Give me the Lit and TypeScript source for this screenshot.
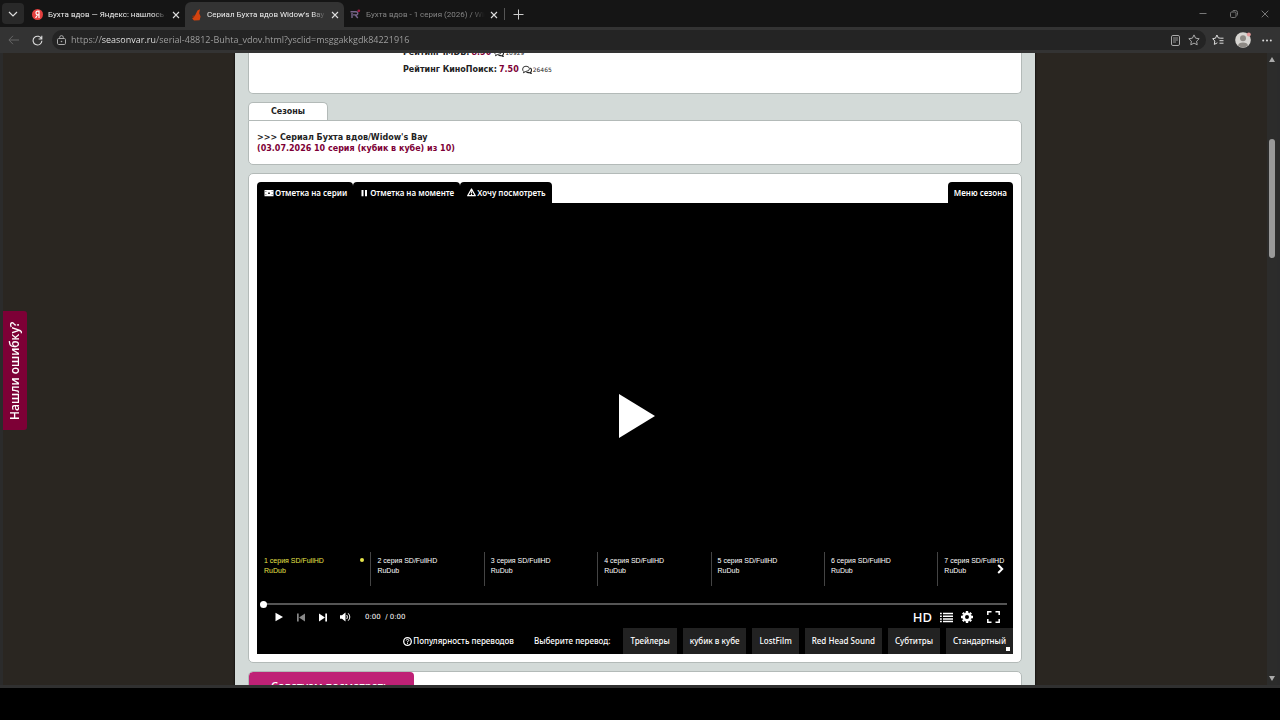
import { LitElement, html, css, svg } from "lit";
import { customElement, state } from "lit/decorators.js";
import { classMap } from "lit/directives/class-map.js";

const icon = (name: string, w: number, h: number, box: string, body: unknown) =>
  html`<svg class="icon ${name}" width=${w} height=${h} viewBox=${box} aria-hidden="true">${body}</svg>`;

const close = () =>
  icon("close", 8, 8, "0 0 8 8", svg`<path d="M1 1 7 7M7 1 1 7" fill="none" stroke="currentColor" stroke-width="1.1"/>`);

@customElement("browser-tabs")
export class BrowserTabs extends LitElement {
  static styles = css`
    :host {
      display: flex;
      align-items: flex-end;
      height: 27px;
      background: #151515;
      color: #eee;
      font: 8px/12px Roboto, "Noto Sans", sans-serif;
    }
    button {
      border: 0;
      padding: 0;
      background: none;
      color: inherit;
      display: grid;
      place-items: center;
    }
    .list {
      width: 22px;
      height: 21px;
      margin: 0 2px 3px;
      border-radius: 4px;
      background: #292929;
    }
    .tab {
      display: flex;
      align-items: center;
      box-sizing: border-box;
      flex: 0 1 159px;
      min-width: 0;
      height: 25px;
      padding: 0 5px 0 6px;
      gap: 5px;
      border-radius: 6px 6px 0 0;
    }
    .tab.active {
      background: #333;
    }
    .tab.idle {
      color: #858585;
    }
    .tab .title {
      flex: 1;
      min-width: 0;
      overflow: hidden;
      white-space: nowrap;
      mask-image: linear-gradient(to right, #000 calc(100% - 14px), transparent);
    }
    .tab .icon.close {
      color: #ddd;
    }
    .icon {
      flex: none;
    }
    .divider {
      width: 1px;
      height: 12px;
      margin: 0 0 7px 1px;
      background: #555;
    }
    .add {
      width: 12px;
      height: 25px;
      margin-left: 7px;
    }
    .window {
      display: flex;
      margin-left: auto;
      color: #777;
    }
    .window button {
      width: 31px;
      height: 27px;
    }
  `;

  render() {
    return html`
      <button class="list" aria-label="Вкладки">
        ${icon("", 10, 6, "0 0 10 6", svg`<path d="M1 1 5 5 9 1" fill="none" stroke="#ddd" stroke-width="1.2"/>`)}
      </button>
      <div class="tab">
        ${icon("", 11, 11, "0 0 11 11", svg`<circle cx="5.5" cy="5.5" r="5.5" fill="#e5403f"/><path d="M7 9V2.2H5.7C3.4 2.2 3.4 5.8 5.7 5.8H7M5.5 5.8 3.6 9" fill="none" stroke="#fff" stroke-width="1.2"/>`)}
        <span class="title">Бухта вдов — Яндекс: нашлось 49 тыс.</span>
        <button aria-label="Закрыть">${close()}</button>
      </div>
      <div class="tab active">
        ${icon("", 11, 12, "0 0 11 12", svg`<path d="M6.5 1.5 9 0.3 8.2 4.3 9.6 7.5 8.6 11.2 3 11.6 1.2 9.6 4 6.5Z" fill="#d4430f"/><path d="M1 7 4 6 2.4 9Z" fill="#8b2b0c"/>`)}
        <span class="title">Сериал Бухта вдов Widow's Bay смотреть</span>
        <button aria-label="Закрыть">${close()}</button>
      </div>
      <div class="tab idle">
        ${icon("", 11, 11, "0 0 11 11", svg`<path d="M.5 2.7H6Q7.8 2.7 7.8 4.3T6 5.9H3M2 4V9M5.3 6 7.8 9" fill="none" stroke="#77658a" stroke-width="1.4"/><circle cx="8.8" cy="1.8" r="1.4" fill="#a01c45"/>`)}
        <span class="title">Бухта вдов - 1 серия (2026) / Widow's Bay</span>
        <button aria-label="Закрыть">${close()}</button>
      </div>
      <span class="divider"></span>
      <button class="add" aria-label="Новая вкладка">
        ${icon("", 11, 11, "0 0 11 11", svg`<path d="M5.5 .5V10.5M.5 5.5H10.5" fill="none" stroke="#ccc"/>`)}
      </button>
      <div class="window">
        <button aria-label="Свернуть">${icon("", 8, 8, "0 0 8 8", svg`<path d="M.5 3.5H7.5" stroke="currentColor"/>`)}</button>
        <button aria-label="Развернуть">
          ${icon("", 8, 8, "0 0 8 8", svg`<rect x=".5" y="2" width="5.5" height="5.5" rx="1.2" fill="none" stroke="currentColor"/><path d="M2.3 1.5Q2.6.5 4 .5H5.5Q7.5.5 7.5 2.5V4.5Q7.5 5.5 6.7 5.7" fill="none" stroke="currentColor"/>`)}
        </button>
        <button aria-label="Закрыть окно">${icon("", 8, 8, "0 0 8 8", svg`<path d="M.7 .7 7.3 7.3M7.3 .7 .7 7.3" stroke="currentColor"/>`)}</button>
      </div>
    `;
  }
}

@customElement("browser-toolbar")
export class BrowserToolbar extends LitElement {
  static styles = css`
    :host {
      display: flex;
      align-items: center;
      gap: 11px;
      height: 26px;
      padding: 0 8px;
      background: #333;
      color: #aaa;
    }
    button {
      flex: none;
      border: 0;
      padding: 0;
      background: none;
      color: inherit;
      display: grid;
      place-items: center;
    }
    .nav {
      display: flex;
      gap: 13px;
    }
    .back {
      color: #666;
    }
    .reload {
      color: #ddd;
    }
    .address {
      display: flex;
      align-items: center;
      gap: 5px;
      flex: 1;
      height: 20px;
      margin: 0 -5px 0 -2px;
      padding: 0 6px 0 5px;
      border-radius: 10px;
      background: #242424;
    }
    .address input {
      flex: 1;
      min-width: 0;
      height: 20px;
      border: 0;
      padding: 0;
      outline: 0;
      color: #a4a4a4;
      font: 9px/20px "Open Sans", "Noto Sans", sans-serif;
      background: linear-gradient(to right, #a4a4a4 30px, #f0f0f0 30px, #f0f0f0 84px, #a4a4a4 84px);
      background-clip: text;
      -webkit-text-fill-color: transparent;
    }
    .address .star {
      margin-left: 3px;
    }
    .right {
      color: #ddd;
    }
  `;

  render() {
    const star = "M6 .9 7.6 4.2 11.2 4.7 8.6 7.2 9.2 10.8 6 9.1 2.8 10.8 3.4 7.2 .8 4.7 4.4 4.2Z";
    return html`
      <div class="nav">
        <button class="back" aria-label="Назад">
          ${icon("", 11, 10, "0 0 11 10", svg`<path d="M5 .8 .9 5 5 9.2M1 5H11" fill="none" stroke="currentColor"/>`)}
        </button>
        <button class="reload" aria-label="Обновить">
          ${icon("", 11, 11, "0 0 11 11", svg`<path d="M9.6 4A4.4 4.4 0 1 0 9.9 5.8M9.8 .8V4H6.6" fill="none" stroke="currentColor" stroke-width="1.1"/>`)}
        </button>
      </div>
      <div class="address">
        ${icon("", 9, 10, "0 0 9 10", svg`<rect x=".5" y="3.5" width="8" height="6" rx="1.2" fill="none" stroke="currentColor"/><path d="M2.7 3.5V2.4A1.8 1.8 0 0 1 6.3 2.4V3.5" fill="none" stroke="currentColor"/><circle cx="4.5" cy="6.5" r=".8" fill="currentColor"/>`)}
        <input
          type="text"
          aria-label="Адрес"
          value="https://seasonvar.ru/serial-48812-Buhta_vdov.html?ysclid=msggakkgdk84221916"
        />
        <button aria-label="Режим чтения">
          ${icon("", 9, 11, "0 0 9 11", svg`<rect x=".5" y=".5" width="8" height="10" rx="1.4" fill="none" stroke="currentColor"/><path d="M2 3H7M2 5H7M2 7H5" stroke="currentColor" stroke-width=".8"/>`)}
        </button>
        <button class="star" aria-label="В избранное">
          ${icon("", 12, 12, "0 0 12 12", svg`<path d=${star} fill="none" stroke="currentColor"/>`)}
        </button>
      </div>
      <button class="right" aria-label="Избранное">
        ${icon("", 12, 12, "0 0 12 12", svg`<path d="M8.2 4.1 6.4 4 4.9 1 3.5 4.2 .7 4.7 2.8 7 2.3 10.4 5.4 8.8M8.2 4.2H11.5M7.5 6.7H11.5M7.5 9.2H11.5" fill="none" stroke="currentColor"/>`)}
      </button>
      <button aria-label="Профиль">
        ${icon("", 16, 16, "0 0 16 16", svg`<circle cx="8" cy="8" r="7.8" fill="#d8d6d2"/><circle cx="8" cy="6.3" r="3" fill="#8d8984"/><path d="M3 13.5Q3.5 10.5 8 10.5T13 13.5Q8 17.5 3 13.5" fill="#8d8984"/><circle cx="13.8" cy="2.4" r="2" fill="#e39a9a"/>`)}
      </button>
      <button class="right" aria-label="Меню">
        ${icon("", 10, 3, "0 0 10 3", svg`<g fill="currentColor"><circle cx="1.2" cy="1.5" r="1"/><circle cx="5" cy="1.5" r="1"/><circle cx="8.8" cy="1.5" r="1"/></g>`)}
      </button>
    `;
  }
}

@customElement("season-player")
export class SeasonPlayer extends LitElement {
  @state() private current = 0;

  private episodes = [1, 2, 3, 4, 5, 6, 7];
  private translations = ["Трейлеры", "кубик в кубе", "LostFilm", "Red Head Sound", "Субтитры", "Стандартный"];

  static styles = css`
    :host {
      display: block;
      color: #fff;
      font: 500 8px/12px "Noto Sans", sans-serif;
    }
    button {
      border: 0;
      padding: 0;
      margin: 0;
      background: none;
      color: inherit;
      font: inherit;
      display: flex;
      align-items: center;
      justify-content: center;
      white-space: nowrap;
    }
    .marks {
      display: flex;
      font-weight: 600;
    }
    .marks button {
      height: 21px;
      padding: 0 6px 0 7px;
      gap: 1px;
      border-radius: 4px 4px 0 0;
      background: #000;
    }
    .marks .season {
      margin-left: auto;
      padding: 0 6px;
    }
    .screen {
      position: relative;
      display: grid;
      aspect-ratio: 16 / 9;
      background: #000;
    }
    .start,
    .panel {
      grid-area: 1 / 1;
      min-width: 0;
    }
    .start {
      place-self: center;
      padding-left: 4px;
    }
    .panel {
      align-self: end;
      padding-bottom: 2px;
    }
    .playlist {
      position: relative;
    }
    .episodes {
      display: flex;
      overflow: hidden;
    }
    .episode {
      box-sizing: border-box;
      flex: 0 0 15%;
      height: 34px;
      align-items: flex-start;
      justify-content: space-between;
      padding: 4px 6px;
      border-left: 1px solid #444;
      font: 7px/10px "Liberation Sans", Arial, sans-serif;
      text-align: left;
    }
    .episode:first-child {
      border-color: transparent;
    }
    .episode.active {
      color: #e6e44a;
    }
    .episode.active::after {
      content: "";
      width: 4px;
      height: 4px;
      margin-top: 2px;
      border-radius: 50%;
      background: #e6e44a;
    }
    .next-page {
      position: absolute;
      right: 9px;
      top: 12px;
    }
    .seek {
      display: block;
      width: calc(100% - 9px);
      height: 8px;
      margin: 14px 6px 0 3px;
      appearance: none;
      background: linear-gradient(#555, #555) center / 100% 2px no-repeat;
    }
    .seek::-webkit-slider-thumb {
      appearance: none;
      width: 7px;
      height: 7px;
      border-radius: 50%;
      background: #fff;
    }
    .controls {
      display: flex;
      align-items: center;
      height: 18px;
      padding: 0 13px 0 16px;
    }
    .controls .group {
      display: flex;
      align-items: center;
      gap: 10px;
    }
    .controls .group button {
      width: 12px;
      height: 18px;
    }
    .controls .dim {
      color: #888;
    }
    .time {
      margin-left: 14px;
      font: 7px/18px "DejaVu Sans", Verdana, sans-serif;
    }
    .tools {
      display: flex;
      align-items: center;
      gap: 8px;
      margin-left: auto;
    }
    .hd {
      font-size: 13px;
      line-height: 18px;
    }
    .full {
      margin-left: 6px;
    }
    .voices {
      position: relative;
      display: flex;
      flex-wrap: wrap;
      justify-content: flex-end;
      gap: 6px;
      background: #000;
    }
    .voices button {
      height: 26px;
    }
    .voices .voice {
      padding: 0 7px;
      background: #222;
    }
    .voices .rating {
      gap: 1px;
      margin-right: 14px;
    }
    .voices .label {
      margin-right: 7px;
      line-height: 26px;
    }
    .corner {
      position: absolute;
      right: 3px;
      bottom: 3px;
      width: 4px;
      height: 4px;
      background: #fff;
    }
  `;

  render() {
    return html`
      <div class="marks">
        <button>
          ${icon("", 10, 8, "0 0 10 8", svg`<path fill="currentColor" fill-rule="evenodd" d="M.5 1H9.5V7.3H.5ZM1.5 2.2V3H2.3V2.2ZM1.5 5.2V6H2.3V5.2ZM7.7 2.2V3H8.5V2.2ZM7.7 5.2V6H8.5V5.2ZM4.2 3.4V4.9H5.8V3.4Z"/>`)}
          Отметка на серии
        </button>
        <button>
          ${icon("", 9, 8, "0 0 9 8", svg`<path fill="currentColor" d="M1.5 1H3.5V7.3H1.5ZM5 1H7V7.3H5Z"/>`)}
          Отметка на моменте
        </button>
        <button>
          ${icon("", 9, 9, "0 0 9 9", svg`<path d="M4.5 1 8.3 7.7H.7Z" fill="none" stroke="currentColor" stroke-width="1.3" stroke-linejoin="round"/><path d="M4.5 3.2V5.4M4.5 6V6.9" stroke="currentColor" stroke-width="1.1"/>`)}
          Хочу посмотреть
        </button>
        <button class="season">Меню сезона</button>
      </div>
      <div class="screen">
        <button class="start" aria-label="Смотреть">
          ${icon("", 36, 44, "0 0 36 44", svg`<path d="M0 0 36 22 0 44Z" fill="#fff"/>`)}
        </button>
        <div class="panel">
          <div class="playlist">
            <div class="episodes">
              ${this.episodes.map(
                (n, i) => html`<button
                  class=${classMap({ episode: true, active: i === this.current })}
                  @click=${() => (this.current = i)}
                >
                  <span>${n} серия SD/FullHD<br />RuDub</span>
                </button>`
              )}
            </div>
            <button class="next-page" aria-label="Дальше">
              ${icon("", 7, 10, "0 0 7 10", svg`<path d="M1.2 1 5.2 5 1.2 9" fill="none" stroke="#fff" stroke-width="2"/>`)}
            </button>
          </div>
          <input class="seek" type="range" min="0" max="100" value="0" aria-label="Позиция" />
          <div class="controls">
            <div class="group">
              <button aria-label="Играть">${icon("", 8, 10, "0 0 8 10", svg`<path d="M.5 .8 8 5 .5 9.2Z" fill="currentColor"/>`)}</button>
              <button class="dim" aria-label="Предыдущая">
                ${icon("", 8, 9, "0 0 8 9", svg`<path d="M0 .5H1.7V8.5H0ZM8 .5V8.5L2 4.5Z" fill="currentColor"/>`)}
              </button>
              <button aria-label="Следующая">
                ${icon("", 8, 9, "0 0 8 9", svg`<path d="M6.3 .5H8V8.5H6.3ZM0 .5V8.5L6 4.5Z" fill="currentColor"/>`)}
              </button>
              <button aria-label="Звук">
                ${icon("", 11, 10, "0 0 11 10", svg`<path d="M0 3.2H2L5.5 .5V9.5L2 6.8H0Z" fill="currentColor"/><path d="M6.8 3Q8 5 6.8 7M8.2 1.3Q11.4 5 8.2 8.7" fill="none" stroke="currentColor"/>`)}
              </button>
            </div>
            <span class="time">0:00 &nbsp;/ 0:00</span>
            <div class="tools">
              <button class="hd">HD</button>
              <button aria-label="Список">
                ${icon("", 13, 11, "0 0 13 11", svg`<path d="M0 1.5H1.8M3 1.5H13M0 4.2H1.8M3 4.2H13M0 6.9H1.8M3 6.9H13M0 9.6H1.8M3 9.6H13" stroke="currentColor" stroke-width="1.5"/>`)}
              </button>
              <button aria-label="Настройки">
                ${icon("", 12, 12, "0 0 12 12", svg`<circle cx="6" cy="6" r="3.3" fill="none" stroke="currentColor" stroke-width="2.6"/><g stroke="currentColor" stroke-width="2.4"><path d="M6 0V2M6 10V12M0 6H2M10 6H12M1.8 1.8 3 3M9 9 10.2 10.2M10.2 1.8 9 3M3 9 1.8 10.2"/></g>`)}
              </button>
              <button class="full" aria-label="Во весь экран">
                ${icon("", 13, 12, "0 0 13 12", svg`<path d="M.8 4V.8H4.5M8.5 .8H12.2V4M12.2 8V11.2H8.5M4.5 11.2H.8V8" fill="none" stroke="currentColor" stroke-width="1.5"/>`)}
              </button>
            </div>
          </div>
        </div>
      </div>
      <div class="voices">
        <button class="rating">
          ${icon("", 9, 9, "0 0 9 9", svg`<circle cx="4.5" cy="4.5" r="3.8" fill="none" stroke="currentColor" stroke-width="1.3"/><path d="M3.2 3.5Q3.3 2.4 4.5 2.4T5.8 3.5Q5.8 4.2 4.5 4.6V5.4M4.5 6V6.9" fill="none" stroke="currentColor"/>`)}
          Популярность переводов
        </button>
        <span class="label">Выберите перевод:</span>
        ${this.translations.map((t) => html`<button class="voice">${t}</button>`)}
        <span class="corner"></span>
      </div>
    `;
  }
}

@customElement("app-root")
export class AppRoot extends LitElement {
  static styles = css`
    :host {
      display: flex;
      flex-direction: column;
      height: 100vh;
      overflow: hidden;
      background: #000;
      color: #222;
      font: 8px/11px "DejaVu Sans", Verdana, sans-serif;
    }
    .window {
      display: flex;
      flex: 1;
      min-height: 0;
      padding: 0 3px;
      background: #2b2b2b;
      border-bottom: 3px solid #303030;
    }
    .view {
      position: relative;
      flex: 1;
      min-width: 0;
      overflow: hidden;
      background: #2a2621;
    }
    .page {
      display: flex;
      flex-direction: column;
      gap: 8px;
      box-sizing: border-box;
      max-width: 800px;
      margin: -9px auto 0;
      padding: 0 13px;
      background: #d3dad8;
      box-shadow: 0 0 2px #000;
    }
    .card {
      border: 1px solid #b3bab8;
      border-radius: 5px;
      background: #fff;
    }
    .ratings {
      margin: 0;
      padding: 0 8px 15px 154px;
      border-top: 0;
      border-radius: 0 0 5px 5px;
    }
    .ratings div {
      display: flex;
      align-items: center;
      gap: 2px;
      height: 17px;
      font-weight: 700;
    }
    .ratings dt,
    .ratings dd {
      margin: 0;
    }
    .ratings dd {
      display: flex;
      align-items: center;
      gap: 3px;
    }
    .accent {
      color: #7d0036;
    }
    .votes {
      display: flex;
      align-items: center;
      gap: 1px;
      font-size: 6px;
      font-weight: 400;
    }
    .tab {
      width: 80px;
      height: 18px;
      box-sizing: border-box;
      padding: 0;
      border: 1px solid #b3bab8;
      border-bottom: 0;
      border-radius: 5px 5px 0 0;
      background: #fff;
      color: #222;
      font: 700 8px/17px "DejaVu Sans", Verdana, sans-serif;
      display: block;
    }
    .seasons .card {
      padding: 11px 8px 10px;
      border-top-left-radius: 0;
      font-weight: 700;
    }
    .seasons a {
      display: block;
      width: fit-content;
      color: #222;
      text-decoration: none;
    }
    .seasons a.accent {
      color: #7d0036;
    }
    .video {
      padding: 8px;
    }
    .advice {
      height: 40px;
      overflow: hidden;
    }
    .advice h2 {
      display: inline-block;
      margin: 0;
      padding: 0 25px 0 22px;
      border-radius: 4px 4px 0 0;
      background: #bf2176;
      color: #fff;
      font: 500 11px/28px "Noto Sans", sans-serif;
      height: 40px;
    }
    .report {
      position: absolute;
      left: 0;
      top: 258px;
      height: 119px;
      width: 24px;
      padding: 0;
      border: 0;
      border-radius: 3px 0 0 3px;
      background: #7d0036;
      color: #fff;
      font: 600 12px/24px "Open Sans", "Noto Sans", sans-serif;
      writing-mode: vertical-rl;
      transform: rotate(180deg);
    }
    .scroll {
      display: flex;
      flex-direction: column;
      align-items: center;
      justify-content: space-between;
      width: 10px;
      padding: 4px 0;
      background: #2c2c2b;
    }
    .track {
      flex: 1;
      padding-top: 77px;
    }
    .thumb {
      width: 6px;
      height: 119px;
      border-radius: 3px;
      background: #999;
    }
    .taskbar {
      height: 32px;
      background: #000;
    }
  `;

  private rating(label: string, value: string, votes: string) {
    return html`<div>
      <dt>${label}</dt>
      <dd>
        <span class="accent">${value}</span>
        <span class="votes">
          ${icon("", 10, 9, "0 0 10 9", svg`<path d="M2 6.7Q.6 5.8 .6 4 .8 1.2 4 1.2T7.5 3.8Q7.3 6.3 4 6.4L1.4 7.8Z" fill="none" stroke="#222" stroke-width=".9"/><path d="M8.2 3Q9.6 3.8 9.5 5.3T8.6 7.2L9.2 8.5 7 7.6Q5.3 7.8 4.4 7.1" fill="none" stroke="#222" stroke-width="1.1"/>`)}
          ${votes}
        </span>
      </dd>
    </div>`;
  }

  render() {
    return html`
      <browser-tabs></browser-tabs>
      <browser-toolbar></browser-toolbar>
      <div class="window">
        <div class="view">
          <main class="page">
            <dl class="card ratings">
              ${this.rating("Рейтинг IMDB:", "8.50", "10929")} ${this.rating("Рейтинг КиноПоиск:", "7.50", "26465")}
            </dl>
            <section class="seasons">
              <button class="tab">Сезоны</button>
              <div class="card">
                <a href="#">&gt;&gt;&gt; Сериал Бухта вдов/Widow's Bay</a>
                <a class="accent" href="#">(03.07.2026 10 серия (кубик в кубе) из 10)</a>
              </div>
            </section>
            <section class="card video"><season-player></season-player></section>
            <section class="card advice"><h2>Советуем посмотреть</h2></section>
          </main>
          <button class="report">Нашли ошибку?</button>
        </div>
        <div class="scroll">
          ${icon("", 6, 5, "0 0 6 5", svg`<path d="M3 0 6 5H0Z" fill="#aaa"/>`)}
          <div class="track"><div class="thumb"></div></div>
          ${icon("", 6, 5, "0 0 6 5", svg`<path d="M0 0H6L3 5Z" fill="#aaa"/>`)}
        </div>
      </div>
      <footer class="taskbar"></footer>
    `;
  }
}
